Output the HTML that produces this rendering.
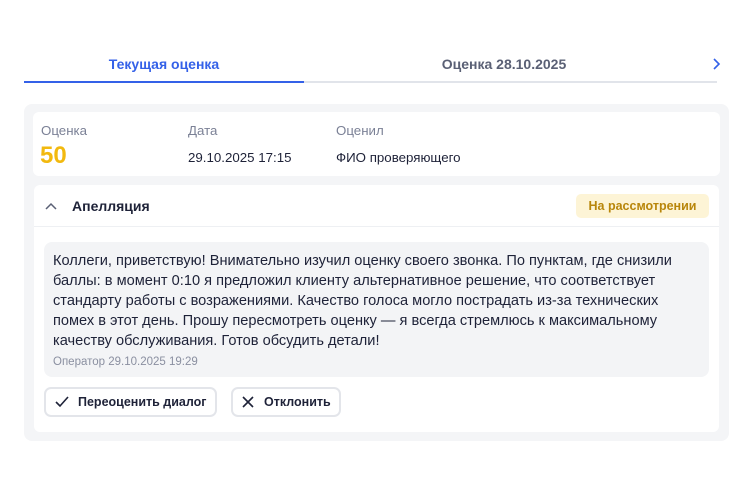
<!DOCTYPE html>
<html><head><meta charset="utf-8"><style>
*{box-sizing:border-box;margin:0;padding:0}
body{width:747px;height:482px;background:#fff;font-family:"Liberation Sans",sans-serif;color:#1e2238;position:relative;overflow:hidden}
.abs{position:absolute}
.tab{position:absolute;top:56px;font-size:14px;font-weight:bold;text-align:center;white-space:nowrap}
.panel{left:24px;top:104px;width:705px;height:337px;background:#f4f5f7;border-radius:8px}
.card1{left:33px;top:112px;width:687px;height:64px;background:#fff;border-radius:6px}
.card2{left:34px;top:185px;width:685px;height:247px;background:#fff;border-radius:6px}
.lbl{font-size:13.3px;color:#7b8196;top:123px}
.val{font-size:13.3px;color:#1e2238;top:150px}
.msg{left:44px;top:242px;width:665px;height:135px;background:#f3f4f6;border-radius:8px}
.line{left:53px;font-size:14.6px;white-space:nowrap;color:#1e2238}
.btn{top:387px;height:30px;border:2px solid #e3e5ea;border-radius:7px;background:#fff;font-size:12.5px;font-weight:bold;display:flex;align-items:center;white-space:nowrap}
</style></head><body>
<div class="tab" style="left:24px;width:280px;color:#3461e8">Текущая оценка</div>
<div class="tab" style="left:304px;width:400px;color:#5a6075">Оценка 28.10.2025</div>
<svg class="abs" style="left:710px;top:57px" width="12" height="14"><path d="M4 2l5 5-5 5" fill="none" stroke="#3461e8" stroke-width="1.6"/></svg>
<div class="abs" style="left:304px;top:81px;width:413px;height:2px;background:#e1e4ea"></div>
<div class="abs" style="left:24px;top:81px;width:280px;height:2px;background:#3461e8"></div>
<div class="abs panel"></div>
<div class="abs card1"></div>
<div class="abs lbl" style="left:41px">Оценка</div>
<div class="abs lbl" style="left:188px">Дата</div>
<div class="abs lbl" style="left:336px">Оценил</div>
<div class="abs" style="left:40px;top:142px;font-size:24px;font-weight:bold;color:#f2b90f">50</div>
<div class="abs val" style="left:188px">29.10.2025 17:15</div>
<div class="abs val" style="left:336px">ФИО проверяющего</div>
<div class="abs card2"></div>
<svg class="abs" style="left:44px;top:200px" width="14" height="12"><path d="M2 9l5-5 5 5" fill="none" stroke="#5a6075" stroke-width="1.5"/></svg>
<div class="abs" style="left:72px;top:198px;font-size:14px;font-weight:bold">Апелляция</div>
<div class="abs" style="left:576px;top:194px;width:133px;height:24px;background:#fdf4d6;border-radius:5px;color:#b8860b;font-size:12.5px;font-weight:bold;text-align:center;line-height:24px">На рассмотрении</div>
<div class="abs" style="left:34px;top:226px;width:685px;height:1px;background:#eef0f3"></div>
<div class="abs msg"></div>
<div class="abs line" style="top:253px">Коллеги, приветствую! Внимательно изучил оценку своего звонка. По пунктам, где снизили</div>
<div class="abs line" style="top:273px">баллы: в момент 0:10 я предложил клиенту альтернативное решение, что соответствует</div>
<div class="abs line" style="top:293px">стандарту работы с возражениями. Качество голоса могло пострадать из-за технических</div>
<div class="abs line" style="top:313px">помех в этот день. Прошу пересмотреть оценку — я всегда стремлюсь к максимальному</div>
<div class="abs line" style="top:333px">качеству обслуживания. Готов обсудить детали!</div>
<div class="abs" style="left:53px;top:356px;font-size:11.5px;color:#8a8fa0">Оператор 29.10.2025 19:29</div>
<div class="abs btn" style="left:44px;width:173px;padding-left:8px"><svg width="16" height="14" style="margin-right:8px"><path d="M2 7l4 4 8-9" fill="none" stroke="#1e2238" stroke-width="1.6"/></svg>Переоценить диалог</div>
<div class="abs btn" style="left:231px;width:110px;padding-left:8px"><svg width="14" height="14" style="margin-right:9px"><path d="M2 2l10 10M12 2L2 12" fill="none" stroke="#1e2238" stroke-width="1.6"/></svg>Отклонить</div>
</body></html>
